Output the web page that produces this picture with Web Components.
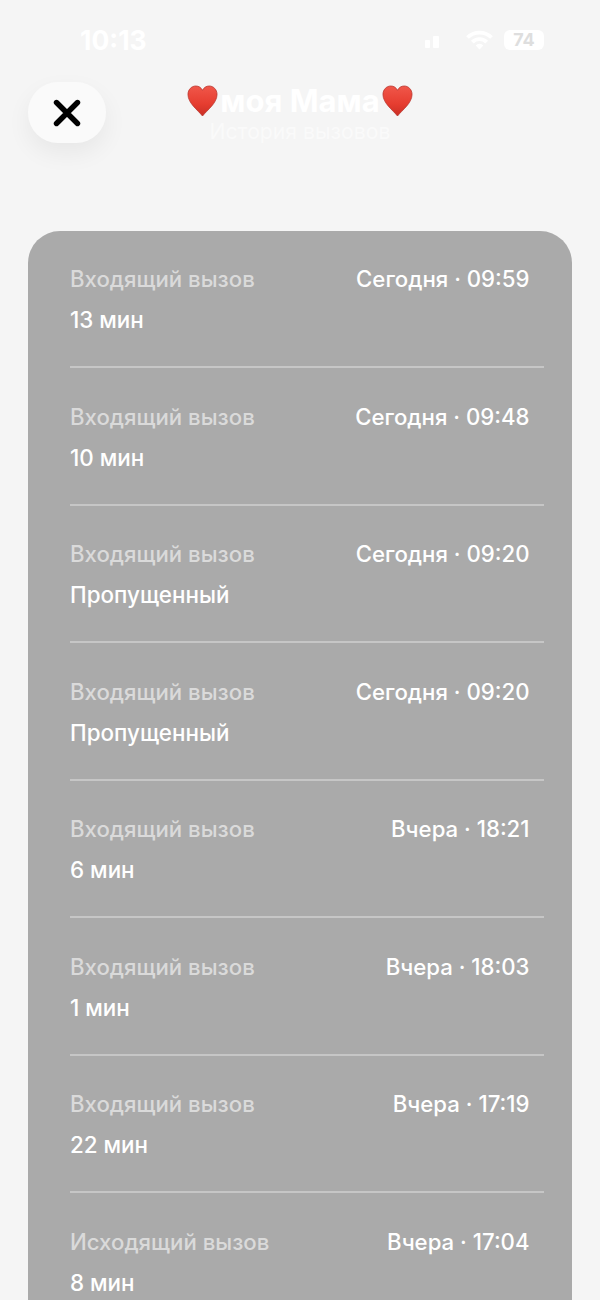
<!DOCTYPE html>
<html lang="ru">
<head>
<meta charset="utf-8">
<title>История вызовов</title>
<style>
  html, body { margin: 0; height: 1300px; overflow: hidden; background: #f5f5f5; font-family: Inter, "Liberation Sans", sans-serif; }
</style>
</head>
<body>
<call-history-screen>
  <status-bar slot="status" time="10:13" battery="74"></status-bar>
  <history-header slot="header" name="моя Мама" subtitle="История вызовов"></history-header>
  <call-row kind="Входящий вызов" when="Сегодня · 09:59" result="13 мин"></call-row>
  <call-row kind="Входящий вызов" when="Сегодня · 09:48" result="10 мин"></call-row>
  <call-row kind="Входящий вызов" when="Сегодня · 09:20" result="Пропущенный"></call-row>
  <call-row kind="Входящий вызов" when="Сегодня · 09:20" result="Пропущенный"></call-row>
  <call-row kind="Входящий вызов" when="Вчера · 18:21" result="6 мин"></call-row>
  <call-row kind="Входящий вызов" when="Вчера · 18:03" result="1 мин"></call-row>
  <call-row kind="Входящий вызов" when="Вчера · 17:19" result="22 мин"></call-row>
  <call-row kind="Исходящий вызов" when="Вчера · 17:04" result="8 мин"></call-row>
</call-history-screen>

<script>
// Screen shell: status bar, header, then the grey card with rows
class CallHistoryScreen extends HTMLElement {
  constructor() {
    super()
    this.attachShadow({ mode: 'open' }).innerHTML = `
<style>
  :host { display: block; width: 600px; }
  .card {
    margin: 0 28px;
    padding-left: 42px;
    padding-right: 28px;
    background: #aaaaaa;
    border-radius: 32px 32px 0 0;
  }
</style>
<slot name="status"></slot>
<slot name="header"></slot>
<div class="card"><slot></slot></div>
`
  }
}

class StatusBar extends HTMLElement {
  constructor() {
    super()
    const time = this.getAttribute('time')
    const battery = this.getAttribute('battery')
    this.attachShadow({ mode: 'open' }).innerHTML = `
<style>
  :host { display: flex; align-items: center; height: 82px; padding: 0 56px 2px 80px; box-sizing: border-box; color: #fff; }
  .time { font-size: 26.5px; font-weight: 700; line-height: 30px; }
  .icons { margin-left: auto; display: flex; align-items: center; }
  .bars { margin-top: 4px; }
  .wifi { margin-left: 26px; }
  .battery {
    margin-left: 11px;
    width: 40px; height: 20px;
    border-radius: 6px;
    background: #fff;
    color: #dedede;
    font-size: 18px; font-weight: 700;
    line-height: 20px; text-align: center;
  }
</style>
<span class="time">${time}</span>
<span class="icons">
  <svg class="bars" width="15" height="12" viewBox="0 0 15 12" fill="#fff">
    <rect x="0" y="4" width="5" height="8" rx="1"/>
    <rect x="8" y="0" width="6" height="12" rx="1"/>
  </svg>
  <svg class="wifi" width="27" height="20" viewBox="0 0 27 20" fill="none" stroke="#fff" stroke-width="3.800">
    <path d="M1.500 7.500a17 17 0 0 1 24 0"/>
    <path d="M6.300 12.200a10.200 10.200 0 0 1 14.400 0"/>
    <path d="M13.500 19.500l-3.800-4a5 5 0 0 1 7.600 0z" fill="#fff" stroke="none"/>
  </svg>
  <span class="battery">${battery}</span>
</span>
`
  }
}

const heartSvg = `
<svg class="heart" width="31" height="32" viewBox="0 0 32 32" preserveAspectRatio="none">
  <path d="M16 31C11 25 1 18 1 9.500C1 4.500 4.800 1 9 1c3 0 5.600 1.500 7 4.300C17.400 2.500 20 1 23 1c4.200 0 8 3.500 8 8.500C31 18 21 25 16 31z" fill="url(#h)" stroke="#b8332b" stroke-width=".8"/>
  <defs>
    <linearGradient id="h" x1="0" y1="0" x2="0" y2="1">
      <stop offset="0" stop-color="#f0574a"/>
      <stop offset=".6" stop-color="#e63d30"/>
      <stop offset="1" stop-color="#c92f25"/>
    </linearGradient>
  </defs>
</svg>`

class HistoryHeader extends HTMLElement {
  constructor() {
    super()
    this.attachShadow({ mode: 'open' }).innerHTML = `
<style>
  :host { display: grid; grid-template-columns: 1fr auto 1fr; align-items: start; padding: 0 28px; height: 149px; color: #fff; }
  button {
    width: 78px; height: 61px;
    padding: 0; border: none;
    border-radius: 30px;
    background: #fafafa;
    box-shadow: 0 10px 24px rgba(0, 0, 0, 0.06);
    display: flex; align-items: center; justify-content: center;
  }
  .title { display: flex; flex-direction: column; align-items: center; margin-top: 3px; }
  .name { display: flex; align-items: center; gap: 2px; height: 32px; font-size: 31px; font-weight: 700; line-height: 32px; white-space: nowrap; }
  .sub { margin-top: 1px; font-size: 21.2px; line-height: 26px; color: #fafafa; }
</style>
<div><button aria-label="Закрыть">
  <svg width="28" height="28" viewBox="0 0 28 28" fill="none" stroke="#000" stroke-width="5.400" stroke-linecap="round">
    <path d="M3.500 3.500l21 21M24.500 3.500l-21 21"/>
  </svg>
</button></div>
<div class="title">
  <div class="name">${heartSvg}<span>${this.getAttribute('name')}</span>${heartSvg}</div>
  <div class="sub">${this.getAttribute('subtitle')}</div>
</div>
<div></div>
`
  }
}

class CallRow extends HTMLElement {
  constructor() {
    super()
    this.attachShadow({ mode: 'open' }).innerHTML = `
<style>
  :host { display: block; box-sizing: border-box; height: 137.5px; padding-top: 34px; color: #fff; font-size: 22.2px; line-height: 28px; font-weight: 500; }
  .top { display: flex; justify-content: space-between; padding-right: 14.5px; }
  .kind { color: #dadada; }
  .result { margin-top: 13px; font-size: 22.4px; }
  .rule { margin-top: 32px; height: 2px; background: #c6c6c6; }
</style>
<div class="top">
  <span class="kind">${this.getAttribute('kind')}</span>
  <span class="when">${this.getAttribute('when')}</span>
</div>
<div class="result">${this.getAttribute('result')}</div>
<div class="rule"></div>
`
  }
}

customElements.define('call-history-screen', CallHistoryScreen)
customElements.define('status-bar', StatusBar)
customElements.define('history-header', HistoryHeader)
customElements.define('call-row', CallRow)
</script>
</body>
</html>
